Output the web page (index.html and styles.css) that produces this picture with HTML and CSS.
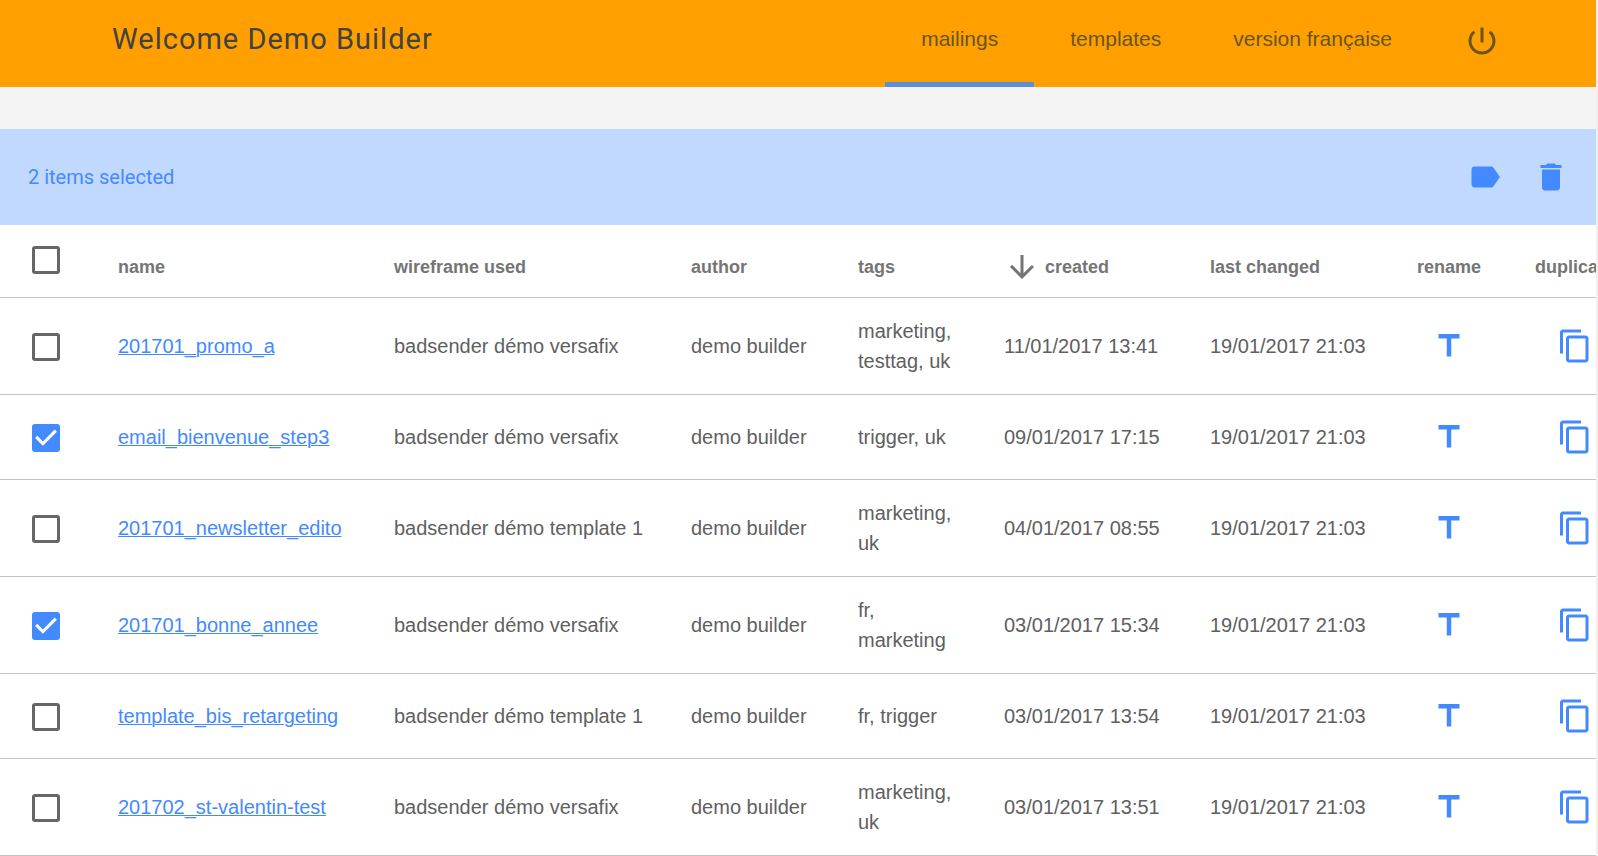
FILE: index.html
```html
<!DOCTYPE html>
<html lang="en">
<head>
<meta charset="utf-8">
<title>Mailings</title>
<link rel="stylesheet" href="styles.css">
</head>
<body>
<svg class="sprite" aria-hidden="true">
  <symbol id="i-power" viewBox="0 0 24 24"><path d="M13 3h-2v10h2V3zm4.83 2.17l-1.42 1.42C17.99 7.86 19 9.81 19 12c0 3.87-3.13 7-7 7s-7-3.13-7-7c0-2.19 1.01-4.14 2.58-5.42L6.17 5.17C4.23 6.82 3 9.26 3 12c0 4.97 4.03 9 9 9s9-4.03 9-9c0-2.74-1.23-5.18-3.17-6.83z"/></symbol>
  <symbol id="i-label" viewBox="0 0 24 24"><path d="M17.63 5.84C17.27 5.33 16.67 5 16 5L5 5.01C3.9 5.01 3 5.9 3 7v10c0 1.1.9 1.99 2 1.99L16 19c.67 0 1.27-.33 1.63-.84L22 12l-4.37-6.16z"/></symbol>
  <symbol id="i-delete" viewBox="0 0 24 24"><path d="M6 19c0 1.1.9 2 2 2h8c1.1 0 2-.9 2-2V7H6v12zM19 4h-3.5l-1-1h-5l-1 1H5v2h14V4z"/></symbol>
  <symbol id="i-down" viewBox="0 0 24 24"><path d="M20 12l-1.41-1.41L13 16.17V4h-2v12.17l-5.58-5.59L4 12l8 8 8-8z"/></symbol>
  <symbol id="i-title" viewBox="0 0 24 24"><path d="M5 4v3h5.5v12h3V7H19V4z"/></symbol>
  <symbol id="i-copy" viewBox="0 0 24 24"><path d="M16 1H4c-1.1 0-2 .9-2 2v14h2V3h12V1zm3 4H8c-1.1 0-2 .9-2 2v14c0 1.1.9 2 2 2h11c1.1 0 2-.9 2-2V7c0-1.1-.9-2-2-2zm0 16H8V7h11v14z"/></symbol>
</svg>
<div class="page">
  <header class="header">
    <h1 class="title">Welcome Demo Builder</h1>
    <nav class="nav">
      <a class="tab tab-active" href="#mailings">mailings</a>
      <a class="tab" href="#templates">templates</a>
      <a class="tab" href="#fr">version française</a>
      <a class="tab tab-icon" href="#logout" aria-label="log out"><svg class="icon"><use href="#i-power"/></svg></a>
    </nav>
  </header>
  <main class="main">
    <div class="selection">
      <span class="count">2 items selected</span>
      <div class="actions">
        <button class="action" type="button" aria-label="tags"><svg class="icon"><use href="#i-label"/></svg></button>
        <button class="action" type="button" aria-label="delete"><svg class="icon"><use href="#i-delete"/></svg></button>
      </div>
    </div>
    <table class="table">
      <colgroup><col class="c-check"><col class="c-name"><col class="c-wire"><col class="c-author"><col class="c-tags"><col class="c-date"><col class="c-date"><col class="c-rename"><col class="c-copy"></colgroup>
      <thead>
        <tr>
          <th class="check"><input type="checkbox" class="box" aria-label="select all"></th>
          <th>name</th><th>wireframe used</th><th>author</th><th>tags</th>
          <th class="sorted"><span class="sort"><svg class="icon"><use href="#i-down"/></svg>created</span></th>
          <th>last changed</th><th class="center">rename</th><th class="center">duplicate</th>
        </tr>
      </thead>
      <tbody>
        <tr>
          <td class="check"><input type="checkbox" class="box" aria-label="201701_promo_a"></td>
          <td><a class="link" href="#m1">201701_promo_a</a></td><td>badsender démo versafix</td><td>demo builder</td><td>marketing, testtag, uk</td><td>11/01/2017 13:41</td><td>19/01/2017 21:03</td>
          <td class="center"><button class="action" type="button" aria-label="rename"><svg class="icon"><use href="#i-title"/></svg></button></td>
          <td class="center"><button class="action" type="button" aria-label="duplicate"><svg class="icon"><use href="#i-copy"/></svg></button></td>
        </tr>
        <tr>
          <td class="check"><input type="checkbox" class="box" aria-label="email_bienvenue_step3" checked></td>
          <td><a class="link" href="#m2">email_bienvenue_step3</a></td><td>badsender démo versafix</td><td>demo builder</td><td>trigger, uk</td><td>09/01/2017 17:15</td><td>19/01/2017 21:03</td>
          <td class="center"><button class="action" type="button" aria-label="rename"><svg class="icon"><use href="#i-title"/></svg></button></td>
          <td class="center"><button class="action" type="button" aria-label="duplicate"><svg class="icon"><use href="#i-copy"/></svg></button></td>
        </tr>
        <tr>
          <td class="check"><input type="checkbox" class="box" aria-label="201701_newsletter_edito"></td>
          <td><a class="link" href="#m3">201701_newsletter_edito</a></td><td>badsender démo template 1</td><td>demo builder</td><td>marketing, uk</td><td>04/01/2017 08:55</td><td>19/01/2017 21:03</td>
          <td class="center"><button class="action" type="button" aria-label="rename"><svg class="icon"><use href="#i-title"/></svg></button></td>
          <td class="center"><button class="action" type="button" aria-label="duplicate"><svg class="icon"><use href="#i-copy"/></svg></button></td>
        </tr>
        <tr>
          <td class="check"><input type="checkbox" class="box" aria-label="201701_bonne_annee" checked></td>
          <td><a class="link" href="#m4">201701_bonne_annee</a></td><td>badsender démo versafix</td><td>demo builder</td><td>fr, marketing</td><td>03/01/2017 15:34</td><td>19/01/2017 21:03</td>
          <td class="center"><button class="action" type="button" aria-label="rename"><svg class="icon"><use href="#i-title"/></svg></button></td>
          <td class="center"><button class="action" type="button" aria-label="duplicate"><svg class="icon"><use href="#i-copy"/></svg></button></td>
        </tr>
        <tr>
          <td class="check"><input type="checkbox" class="box" aria-label="template_bis_retargeting"></td>
          <td><a class="link" href="#m5">template_bis_retargeting</a></td><td>badsender démo template 1</td><td>demo builder</td><td>fr, trigger</td><td>03/01/2017 13:54</td><td>19/01/2017 21:03</td>
          <td class="center"><button class="action" type="button" aria-label="rename"><svg class="icon"><use href="#i-title"/></svg></button></td>
          <td class="center"><button class="action" type="button" aria-label="duplicate"><svg class="icon"><use href="#i-copy"/></svg></button></td>
        </tr>
        <tr>
          <td class="check"><input type="checkbox" class="box" aria-label="201702_st-valentin-test"></td>
          <td><a class="link" href="#m6">201702_st-valentin-test</a></td><td>badsender démo versafix</td><td>demo builder</td><td>marketing, uk</td><td>03/01/2017 13:51</td><td>19/01/2017 21:03</td>
          <td class="center"><button class="action" type="button" aria-label="rename"><svg class="icon"><use href="#i-title"/></svg></button></td>
          <td class="center"><button class="action" type="button" aria-label="duplicate"><svg class="icon"><use href="#i-copy"/></svg></button></td>
        </tr>
      </tbody>
    </table>
  </main>
</div>
</body>
</html>
```
FILE: styles.css
```css
* { box-sizing: border-box; }

body {
  margin: 0;
  background: #f4f4f4;
  color: #606060;
  font: 20px/30px "Liberation Sans", Arial, sans-serif;
}

.sprite { display: none; }

.page {
  border-right: 2px solid #f0f0f0;
  overflow: hidden;
}

.icon {
  display: block;
  width: 36px;
  height: 36px;
  fill: currentColor;
}

.header {
  display: flex;
  justify-content: space-between;
  padding: 0 60px 0 112px;
  background: #ffa000;
}

.title {
  margin: 0;
  color: #424242;
  font: 400 29px/78px Roboto, sans-serif;
  letter-spacing: 1px;
}

.nav { display: flex; }

.tab {
  padding: 0 36px 4px;
  border-bottom: 5px solid transparent;
  color: #685520;
  font-size: 21px;
  line-height: 78px;
  text-decoration: none;
}

.tab-active { border-bottom-color: #5b8fdb; }

.tab-icon {
  display: flex;
  align-items: center;
  padding-bottom: 0;
}

.main {
  margin-top: 42px;
  background: #fff;
}

.selection {
  display: flex;
  align-items: center;
  justify-content: space-between;
  height: 96px;
  padding: 0 27px 0 28px;
  background: #c2d9ff;
  color: #448aff;
}

.count { font-family: Roboto, sans-serif; }

.actions {
  display: flex;
  gap: 30px;
}

.action {
  display: inline-block;
  padding: 0;
  border: 0;
  background: none;
  color: #448aff;
  vertical-align: middle;
  cursor: pointer;
}

.table {
  width: 100%;
  min-width: 1640px;
  table-layout: fixed;
  border-collapse: separate;
  border-spacing: 0;
}

.c-check { width: 91px; }
.c-name { width: 276px; }
.c-wire { width: 297px; }
.c-author { width: 167px; }
.c-tags { width: 146px; }
.c-date { width: 206px; }
.c-rename { width: 120px; }
.c-copy { width: 131px; }

th,
td {
  padding: 18px 20px 18px 27px;
  border-bottom: 1px solid #c4c4c4;
  text-align: left;
  vertical-align: middle;
}

td { height: 85px; }

th {
  height: 73px;
  padding-top: 0;
  padding-bottom: 15px;
  color: #757575;
  font-size: 18px;
  vertical-align: bottom;
  white-space: nowrap;
}

.check {
  padding-top: 20px;
  padding-left: 32px;
}

th.check {
  padding-top: 0;
  padding-bottom: 23px;
}

.center {
  padding-left: 0;
  padding-right: 0;
  text-align: center;
}

th.sorted { padding-bottom: 12px; }

.sort {
  display: flex;
  align-items: center;
  gap: 5px;
}

.link {
  color: #448aff;
  text-decoration-thickness: 1px;
}

.box {
  appearance: none;
  display: block;
  width: 28px;
  height: 28px;
  margin: 0;
  border: 3px solid #666;
  border-radius: 3px;
}

.box:checked {
  border-color: #448aff;
  background: #448aff url("data:image/svg+xml,%3Csvg xmlns='http://www.w3.org/2000/svg' viewBox='3 3 18 18'%3E%3Cpath fill='%23fff' d='M10 17l-5-5 1.41-1.41L10 14.17l7.59-7.59L19 8l-9 9z'/%3E%3C/svg%3E") center / 28px 28px no-repeat border-box;
}
```
